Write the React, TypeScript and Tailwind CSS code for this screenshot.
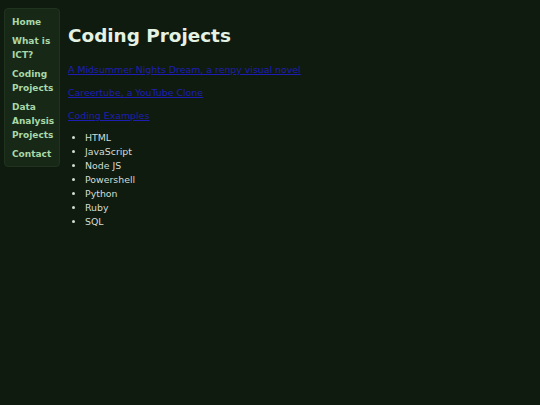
const navItems = ["Home", "What is ICT?", "Coding Projects", "Data Analysis Projects", "Contact"];

const projects = [
  "A Midsummer Nights Dream, a renpy visual novel",
  "Careertube, a YouTube Clone",
  "Coding Examples",
];

const languages = ["HTML", "JavaScript", "Node JS", "Powershell", "Python", "Ruby", "SQL"];

export default function App() {
  return (
    <div className="min-h-[405px] bg-[#0f1b0f] font-['DejaVu_Sans',sans-serif] text-[9.4px] leading-[14px] text-[#d3ddd3]">
      <div className="flex items-start gap-2 pl-1 pt-2">
        {/* Sidebar nav */}
        <nav className="w-[56px] shrink-0 rounded border border-[#1f331f] bg-[#172817] px-[7px] pt-[6px] pb-[5px]">
          <ul className="flex flex-col gap-[5px]">
            {navItems.map((item) => (
              <li key={item} className="text-[9px] font-bold leading-[14px] text-[#a8d8a8]">
                {item}
              </li>
            ))}
          </ul>
        </nav>

        {/* Main */}
        <main className="pt-[17px]">
          <h1 className="mb-[16px] text-[18.4px] font-bold leading-[22px] text-[#e3f2e3]">Coding Projects</h1>
          {projects.map((p) => (
            <p key={p} className="mb-[9px] last-of-type:mb-[8px]">
              <a href="#" className="text-[#1e1eb4] underline">
                {p}
              </a>
            </p>
          ))}
          <ul className="list-disc pl-[17px] marker:text-[#d3ddd3]">
            {languages.map((l) => (
              <li key={l}>{l}</li>
            ))}
          </ul>
        </main>
      </div>
    </div>
  );
}
